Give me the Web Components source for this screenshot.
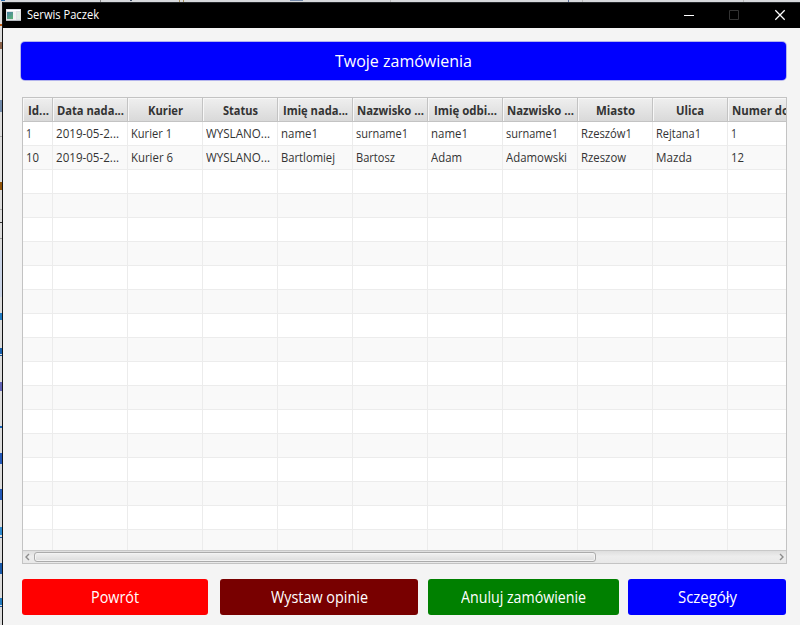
<!DOCTYPE html>
<html lang="pl">
<head>
<meta charset="utf-8">
<title>Serwis Paczek</title>
<style>
html,body{margin:0;height:100%;overflow:hidden}
body{font:12px "Open Sans","Noto Sans",sans-serif;color:#333}
</style>
</head>
<body>
<parcel-desktop></parcel-desktop>
<script>
class FitText extends HTMLElement{
  connectedCallback(){
    if(this.shadowRoot)return;
    const r=this.attachShadow({mode:'open'});
    r.innerHTML=`<style>:host{display:block;white-space:pre;flex:none}span{display:inline-block;transform-origin:0 50%}</style><span><slot></slot></span>`;
    const w=+this.getAttribute('w'),s=r.querySelector('span');
    const n=s.getBoundingClientRect().width;
    if(w&&n){s.style.transform=`scaleX(${w/n})`;this.style.width=w+'px'}
  }
}
customElements.define('fit-text',FitText);

class TitleBar extends HTMLElement{
  constructor(){
    super();
    this.attachShadow({mode:'open'}).innerHTML=`<style>
    :host{display:flex;align-items:flex-start;height:25px;background:#000;color:#fff;padding-left:3px;border-top:1px solid #26292c}
    .name{margin-left:6px;flex:1;line-height:23px;height:24px}
    svg{display:block;flex:none}
    .icon{margin-top:6px}
    </style>
    <svg class="icon" width="15" height="12" viewBox="0 0 15 12" shape-rendering="crispEdges"><defs><linearGradient id="g" x2="0.7" y2="1"><stop stop-color="#4a7fa5"/><stop offset="1" stop-color="#59ae78"/></linearGradient></defs><path fill="#dfe1e5" d="M0 0h15v12H0z"/><path fill="#fff" d="M1 1h13v1H1z"/><path fill="url(#g)" d="M1 3h6v7H1z"/><path fill="#f2f2f2" d="M7 2h3v9H7z"/><path fill="#e0eee5" d="M11 3h3v7h-3z"/><path fill="#b5bac0" d="M0 11h15v1H0z"/></svg>
    <div class="name"><slot></slot></div>
    <svg width="116" height="24" viewBox="684 3 116 24" fill="none"><path fill="#fff" d="M684 15h10v1h-10z"/><path stroke="#333" d="M729.5 10.5h9v9h-9z"/><path stroke="#fff" stroke-width="1.25" d="M775.3 10.3l9.4 9.4m0-9.4l-9.4 9.4"/></svg>`;
  }
}
customElements.define('title-bar',TitleBar);

class ActionButton extends HTMLElement{
  connectedCallback(){
    if(this.shadowRoot)return;
    this.attachShadow({mode:'open'}).innerHTML=`<style>
    :host{display:flex;align-items:center;justify-content:center;box-sizing:border-box;height:36px;border-radius:3px;color:#fff;font-size:16px;line-height:22px;background:var(--tone)}
    :host([banner]){height:38px;border-radius:4px;box-shadow:0 0 0 1px #b3b3ed}
    </style><slot></slot>`;
  }
}
customElements.define('action-button',ActionButton);

class ScrollTrack extends HTMLElement{
  constructor(){
    super();
    this.attachShadow({mode:'open'}).innerHTML=`<style>
    :host{display:flex;box-sizing:border-box;height:13px;border-top:1px solid #c8c8c8;background:linear-gradient(#dedede,#ededed 45%,#e8e8e8)}
    svg{flex:none;display:block}.lane{flex:1;padding-top:1px}
    .thumb{box-sizing:border-box;width:562px;height:10px;border:1px solid #ababab;border-radius:3px;background:linear-gradient(#f1f1f1,#dcdcdc);box-shadow:inset 0 0 0 1px #f3f3f3}
    </style><svg width="11" height="12" fill="none" stroke="#8c8c8c" stroke-width="1.4"><path d="M6 3L3 6l3 3"/></svg>
    <div class="lane"><div class="thumb"></div></div>
    <svg width="11" height="12" fill="none" stroke="#8c8c8c" stroke-width="1.4"><path d="M5 3l3 3-3 3"/></svg>`;
  }
}
customElements.define('scroll-track',ScrollTrack);

class OrderTable extends HTMLElement{
  connectedCallback(){
    const heads=[['Id...',21],['Data nada...',67],['Kurier',35],['Status',35],['Imię nada...',65],['Nazwisko ...',67],['Imię odbi...',63],['Nazwisko ...',67],['Miasto',39],['Ulica',28],['Numer do',57]];
    const rows=[
      [['1',6],['2019-05-2...',63],['Kurier 1',41],['WYSLANO...',64],['name1',37],['surname1',52],['name1',37],['surname1',52],['Rzeszów1',51],['Rejtana1',45],['1',6]],
      [['10',13],['2019-05-2...',63],['Kurier 6',42],['WYSLANO...',64],['Bartlomiej',54],['Bartosz',39],['Adam',31],['Adamowski',61],['Rzeszow',45],['Mazda',36],['12',13]]
    ];
    while(rows.length<18)rows.push(heads.map(()=>['',0]));
    const cell=([t,w])=>`<div>${t?`<fit-text w="${w}">${t}</fit-text>`:''}</div>`;
    this.attachShadow({mode:'open'}).innerHTML=`<style>
    :host{display:flex;flex-direction:column;box-sizing:border-box;width:765px;height:467px;border:1px solid #c3c3c3;background:#fff;overflow:hidden}
    .row,.head{display:grid;grid-template-columns:30px repeat(10,75px);width:780px;box-sizing:border-box;flex:none}
    .head{height:24px;border-bottom:1px solid #c3c3c3;font-weight:700}
    .head div{display:flex;justify-content:center;line-height:25px;border-right:1px solid #c3c3c3;background:linear-gradient(#efefef,#d9d9d9);box-shadow:inset 1px 1px #f7f7f7;overflow:hidden}
    .head div:first-child{padding-left:2px}
    .head div:last-child{justify-content:flex-start;padding-left:4px}
    .body{flex:1;overflow:hidden;min-height:0}
    .row{height:24px;border-bottom:1px solid #ececec}
    .row:nth-child(even){background:#f9f9f9}
    .row div{box-sizing:border-box;padding-left:3px;line-height:23px;border-right:1px solid #ececec;overflow:hidden}
    </style><div class="head">${heads.map(cell).join('')}</div><div class="body">${rows.map(r=>`<div class="row">${r.map(cell).join('')}</div>`).join('')}</div><scroll-track></scroll-track>`;
  }
}
customElements.define('order-table',OrderTable);

// Slivers of the windows that lie behind the application.
class BackdropEdge extends HTMLElement{
  constructor(){
    super();
    const marks=[[24,2,'#bd5b15'],[42,7,'#8b634b'],[100,12,'#718aaa'],[136,1,'#aaa'],[182,8,'#925509'],[209,1,'#aaa'],[222,1,'#333'],[238,1,'#999'],[313,7,'#207bc2'],[348,6,'#1760ad'],[355,1,'#1658a0'],[382,9,'#6364b5'],[426,2,'#1766bd'],[453,11,'#2358b8'],[489,11,'#2459b7'],[527,8,'#2f8bd0'],[537,1,'#1458aa'],[563,11,'#1859aa'],[598,7,'#237bbf'],[606,1,'#1458aa']];
    this.attachShadow({mode:'open'}).innerHTML=`<style>:host{display:block;width:2px;height:623px;background:#dcdcdc;border-right:1px solid #111}svg{display:block}</style>
    <svg width="2" height="623" viewBox="0 2 2 623" shape-rendering="crispEdges"><path fill="#c9d3e5" d="M0 250h2v47H0z"/>${marks.map(([y,h,c])=>`<path fill="${c}" d="M0 ${y}h2v${h}H0z"/>`).join('')}</svg>`;
  }
}
customElements.define('backdrop-edge',BackdropEdge);

class ParcelDesktop extends HTMLElement{
  connectedCallback(){
    this.attachShadow({mode:'open'}).innerHTML=`<style>
    :host{display:grid;grid-template:2px 623px / 3px 797px;width:800px;height:625px}
    .top{grid-column:1/3;display:block}
    .win{background:#f4f4f4;display:flex;flex-direction:column}
    .content{display:flex;flex-direction:column;align-items:flex-start;padding:14px 0 0 18px}
    .banner{width:765px}
    order-table{margin:17px 0 0 1px}
    .actions{display:flex;margin:15px 0 0 1px}
    .a{width:186px;margin-right:12px}.b{width:198px;margin-right:10px}.c{width:191px;margin-right:9px}.d{width:158px}
    </style>
    <svg class="top" width="800" height="2" shape-rendering="crispEdges"><path fill="#d7d9dc" d="M0 0h800v2H0z"/><path fill="#2f6fb0" d="M1 0h4v1H1z"/><path fill="#888" d="M100 0h1v2h-1z"/><path fill="#46546c" d="M130 0h2v1h-2z"/><path fill="#a8925d" d="M179 0h1v2h-1zm4 0h1v2h-1z"/><path fill="#7489aa" d="M290 0h13v1h-13z"/><path fill="#5c709b" d="M568 0h1v2h-1z"/><path fill="#bbb" d="M390 0h1v2h-1zm192 0h1v2h-1zm161 0h1v2h-1z"/></svg>
    <backdrop-edge></backdrop-edge>
    <div class="win"><title-bar><fit-text w="72">Serwis Paczek</fit-text></title-bar>
    <div class="content"><action-button banner class="banner" style="--tone:#00f"><fit-text w="137">Twoje zamówienia</fit-text></action-button>
    <order-table></order-table>
    <div class="actions"><action-button class="a" style="--tone:#f00"><fit-text w="48">Powrót</fit-text></action-button><action-button class="b" style="--tone:#780000"><fit-text w="97">Wystaw opinie</fit-text></action-button><action-button class="c" style="--tone:#008000"><fit-text w="125">Anuluj zamówienie</fit-text></action-button><action-button class="d" style="--tone:#00f"><fit-text w="59">Sczegóły</fit-text></action-button></div>
    </div></div>`;
  }
}
customElements.define('parcel-desktop',ParcelDesktop);
</script>
</body>
</html>
